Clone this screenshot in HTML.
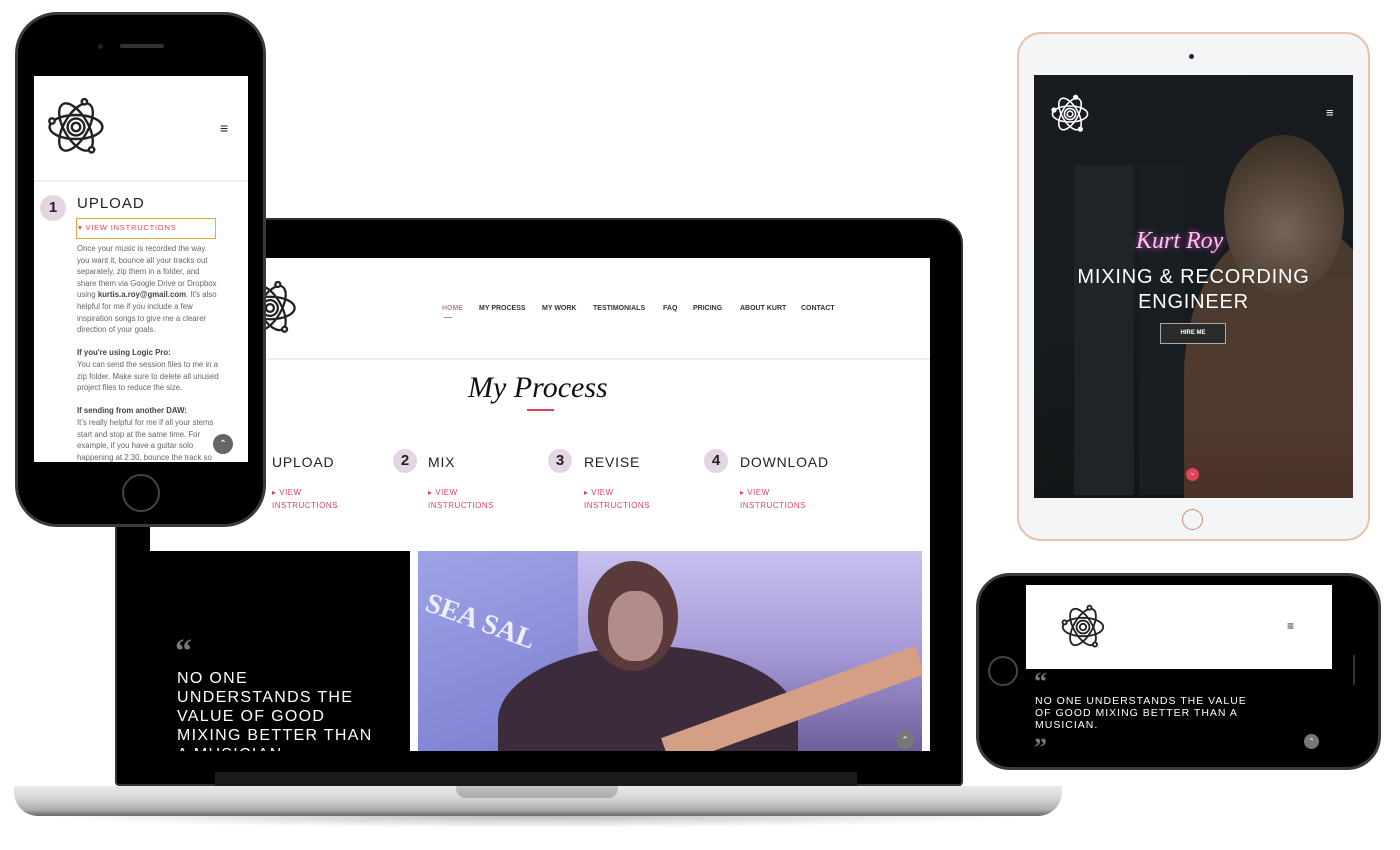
<!DOCTYPE html>
<html><head><meta charset="utf-8"><style>
*{margin:0;padding:0;box-sizing:border-box}
body{width:1400px;height:850px;background:#fff;position:relative;overflow:hidden;font-family:"Liberation Sans",sans-serif}
.a{position:absolute}
.t{position:absolute;white-space:nowrap}
.nav{font-size:7px;font-weight:bold;color:#333;top:47px}
.vi{font-size:8px;color:#e0435b;letter-spacing:.5px;line-height:13px}
.num{position:absolute;width:24px;height:24px;border-radius:50%;background:#e3d5e3;font-size:15px;font-weight:bold;color:#222;text-align:center;line-height:24px}
.st{font-size:14px;color:#222;letter-spacing:.8px}
.ph{font-size:7.8px;color:#666;line-height:11.6px;width:142px;white-space:normal}
.q{font-family:"Liberation Serif",serif;font-weight:bold;color:#777}
</style></head><body>
<svg width="0" height="0" style="position:absolute"><defs>
<symbol id="atom" viewBox="-50 -50 100 100"><g fill="none" stroke="currentColor" stroke-width="4">
<ellipse rx="44" ry="20"/><ellipse rx="44" ry="20" transform="rotate(60)"/><ellipse rx="44" ry="20" transform="rotate(120)"/>
<circle r="14"/><circle r="7"/><circle cx="-40" cy="-10" r="4.5" fill="#fff"/><circle cx="26" cy="38" r="4.5" fill="#fff"/><circle cx="14" cy="-42" r="4.5" fill="#fff"/></g></symbol>
</defs></svg>

<!-- LAPTOP -->
<div class="a" style="left:115px;top:218px;width:848px;height:568px;background:#000;border-radius:26px 26px 4px 4px;border:2px solid #333"></div>
<div class="a" style="left:150px;top:258px;width:780px;height:493px;background:#fff;overflow:hidden">
  <div class="a" style="left:0;top:0;width:780px;height:102px;border-bottom:2px solid #eee"></div>
  <svg class="a" style="left:92px;top:22px;color:#222" width="56" height="56"><use href="#atom"/></svg>
  <div class="t nav" style="left:292px;color:#b48aa6">HOME</div>
  <div class="a" style="left:294px;top:59px;width:8px;height:1px;background:#b48aa6"></div>
  <div class="t nav" style="left:329px">MY PROCESS</div>
  <div class="t nav" style="left:392px">MY WORK</div>
  <div class="t nav" style="left:443px">TESTIMONIALS</div>
  <div class="t nav" style="left:513px">FAQ</div>
  <div class="t nav" style="left:543px">PRICING</div>
  <div class="t nav" style="left:590px">ABOUT KURT</div>
  <div class="t nav" style="left:651px">CONTACT</div>
  <div class="t" style="left:318px;top:113px;font-family:'Liberation Serif',serif;font-style:italic;font-size:30px;color:#111">My Process</div>
  <div class="a" style="left:377px;top:151px;width:27px;height:1.5px;background:#e0435b"></div>
  <div class="num" style="left:243px;top:191px">2</div>
  <div class="num" style="left:398px;top:191px">3</div>
  <div class="num" style="left:554px;top:191px">4</div>
  <div class="t st" style="left:122px;top:196px">UPLOAD</div>
  <div class="t st" style="left:278px;top:196px">MIX</div>
  <div class="t st" style="left:434px;top:196px">REVISE</div>
  <div class="t st" style="left:590px;top:196px">DOWNLOAD</div>
  <div class="t vi" style="left:122px;top:228px">▸ VIEW<br>INSTRUCTIONS</div>
  <div class="t vi" style="left:278px;top:228px">▸ VIEW<br>INSTRUCTIONS</div>
  <div class="t vi" style="left:434px;top:228px">▸ VIEW<br>INSTRUCTIONS</div>
  <div class="t vi" style="left:590px;top:228px">▸ VIEW<br>INSTRUCTIONS</div>
  <div class="a" style="left:0;top:293px;width:260px;height:200px;background:#000"></div>
  <div class="t q" style="left:25px;top:375px;font-size:34px">“</div>
  <div class="a" style="left:27px;top:411px;width:205px;font-size:16px;color:#fff;letter-spacing:1.3px;line-height:19px">NO ONE UNDERSTANDS THE VALUE OF GOOD MIXING BETTER THAN A MUSICIAN.</div>
  <div class="a" style="left:268px;top:293px;width:504px;height:200px;overflow:hidden;background:linear-gradient(180deg,#c7c0ee 0%,#a59ad8 50%,#6e5f9a 100%)">
    <div class="a" style="left:0;top:0;width:160px;height:200px;background:linear-gradient(160deg,#9fa3e6,#7b7fd0)"></div>
    <div class="t" style="left:5px;top:55px;font-family:'Liberation Serif',serif;font-size:28px;color:#eef;transform:rotate(20deg);font-weight:bold">SEA SAL</div>
    <div class="a" style="left:80px;top:95px;width:300px;height:150px;border-radius:50% 50% 0 0;background:#3c2b3a"></div>
    <div class="a" style="left:170px;top:10px;width:90px;height:110px;border-radius:50%;background:#5a3a3a"></div>
    <div class="a" style="left:190px;top:40px;width:55px;height:70px;border-radius:45%;background:#b18c8a"></div>
    <div class="a" style="left:240px;top:140px;width:270px;height:30px;background:#d49f84;transform:rotate(-20deg)"></div>
    <div class="a" style="left:478px;top:180px;width:18px;height:18px;border-radius:50%;background:#777;color:#fff;font-size:9px;text-align:center;line-height:18px">⌃</div>
  </div>
</div>
<div class="a" style="left:215px;top:772px;width:642px;height:14px;background:#1a1a1a"></div>
<div class="a" style="left:14px;top:786px;width:1048px;height:30px;border-radius:2px 2px 24px 24px;background:linear-gradient(#eaeaea,#d6d6d6 40%,#aaa 80%,#666)"></div>
<div class="a" style="left:456px;top:786px;width:162px;height:12px;border-radius:0 0 10px 10px;background:linear-gradient(#c4c4c4,#a9a9a9)"></div>
<div class="a" style="left:40px;top:816px;width:990px;height:12px;background:radial-gradient(ellipse at top,#bbb,#fff 70%)"></div>

<!-- LEFT PHONE -->
<div class="a" style="left:15px;top:12px;width:251px;height:515px;background:#000;border-radius:42px;border:3px solid #3a3a3a"></div>
<div class="a" style="left:98px;top:44px;width:5px;height:5px;border-radius:50%;background:#223"></div>
<div class="a" style="left:120px;top:44px;width:44px;height:4px;border-radius:2px;background:#333"></div>
<div class="a" style="left:122px;top:474px;width:38px;height:38px;border-radius:50%;border:2px solid #444"></div>
<div class="a" style="left:34px;top:76px;width:214px;height:386px;background:#fff;overflow:hidden">
  <div class="a" style="left:0;top:104px;width:214px;height:2px;background:#eee"></div>
  <svg class="a" style="left:12px;top:20px;color:#222" width="60" height="62"><use href="#atom"/></svg>
  <div class="t" style="left:186px;top:44px;font-size:14px;color:#222">≡</div>
  <div class="num" style="left:6px;top:119px;width:26px;height:26px;line-height:26px">1</div>
  <div class="t" style="left:43px;top:119px;font-size:15px;color:#222;letter-spacing:1px">UPLOAD</div>
  <div class="a" style="left:42px;top:142px;width:140px;height:21px;border:1.5px solid #e6a640;font-size:7.5px;color:#e0435b;letter-spacing:.8px;line-height:18px;padding-left:1px">▾ VIEW INSTRUCTIONS</div>
  <div class="a ph" style="left:43px;top:167px">Once your music is recorded the way you want it, bounce all your tracks out separately, zip them in a folder, and share them via Google Drive or Dropbox using <b style="color:#444">kurtis.a.roy@gmail.com</b>. It's also helpful for me if you include a few inspiration songs to give me a clearer direction of your goals.<br><br><b style="color:#444">If you're using Logic Pro:</b><br>You can send the session files to me in a zip folder. Make sure to delete all unused project files to reduce the size.<br><br><b style="color:#444">If sending from another DAW:</b><br>It's really helpful for me if all your stems start and stop at the same time. For example, if you have a guitar solo happening at 2:30, bounce the track so</div>
  <div class="a" style="left:179px;top:358px;width:20px;height:20px;border-radius:50%;background:#666;color:#fff;font-size:10px;text-align:center;line-height:22px">⌃</div>
</div>

<!-- TABLET -->
<div class="a" style="left:1017px;top:32px;width:353px;height:509px;background:#f4f5f7;border-radius:24px;border:2px solid #e8c2aa"></div>
<div class="a" style="left:1189px;top:54px;width:5px;height:5px;border-radius:50%;background:#223"></div>
<div class="a" style="left:1182px;top:509px;width:21px;height:21px;border-radius:50%;border:1.5px solid #c98c74"></div>
<div class="a" style="left:1034px;top:75px;width:319px;height:423px;overflow:hidden;background:linear-gradient(160deg,#1c2226 0%,#1a2024 50%,#121613 100%)">
  <div class="a" style="left:40px;top:90px;width:60px;height:330px;background:#242c30"></div>
  <div class="a" style="left:105px;top:90px;width:45px;height:330px;background:#1e2528"></div>
  <div class="a" style="left:150px;top:150px;width:200px;height:300px;border-radius:50% 40% 0 0;background:linear-gradient(#5b4a37,#6b4a3a 60%,#5c3a2f)"></div>
  <div class="a" style="left:190px;top:60px;width:120px;height:160px;border-radius:50%;background:radial-gradient(circle at 50% 60%,#9a8270,#5d4a38 65%,#3b3226)"></div>
  <div class="a" style="left:0;top:0;width:319px;height:423px;background:rgba(10,12,14,.25)"></div>
  <svg class="a" style="left:16px;top:18px;color:#fff" width="40" height="42"><use href="#atom"/></svg>
  <div class="t" style="left:292px;top:30px;font-size:13px;color:#fff">≡</div>
  <div class="t" style="left:102px;top:153px;font-family:'Liberation Serif',serif;font-style:italic;font-size:24px;color:#f5c8f0;text-shadow:0 0 6px #e040c0">Kurt Roy</div>
  <div class="a" style="left:0;top:190px;width:319px;text-align:center;font-size:20px;color:#fff;letter-spacing:.8px;line-height:25px">MIXING &amp; RECORDING<br>ENGINEER</div>
  <div class="a" style="left:126px;top:248px;width:66px;height:21px;border:1.5px solid #aaa;background:#2a2a2a;color:#fff;font-size:6px;font-weight:bold;text-align:center;line-height:18px">HIRE ME</div>
  <div class="a" style="left:152px;top:393px;width:13px;height:13px;border-radius:50%;background:#e0435b;color:#fff;font-size:7px;text-align:center;line-height:12px">⌄</div>
</div>

<!-- RIGHT PHONE -->
<div class="a" style="left:976px;top:573px;width:405px;height:197px;background:#000;border-radius:34px;border:3px solid #3a3a3a"></div>
<div class="a" style="left:988px;top:656px;width:30px;height:30px;border-radius:50%;border:2px solid #444"></div>
<div class="a" style="left:1353px;top:655px;width:2px;height:30px;background:#333"></div>
<div class="a" style="left:1026px;top:585px;width:306px;height:172px;background:#000;overflow:hidden">
  <div class="a" style="left:0;top:0;width:306px;height:84px;background:#fff"></div>
  <svg class="a" style="left:34px;top:18px;color:#222" width="46" height="48"><use href="#atom"/></svg>
  <div class="t" style="left:261px;top:34px;font-size:12px;color:#222">≡</div>
  <div class="t q" style="left:8px;top:82px;font-size:26px;line-height:30px">“</div>
  <div class="a" style="left:9px;top:110px;width:230px;font-size:10.5px;color:#fff;letter-spacing:1px;line-height:12px">NO ONE UNDERSTANDS THE VALUE OF GOOD MIXING BETTER THAN A MUSICIAN.</div>
  <div class="t q" style="left:8px;top:148px;font-size:26px;line-height:30px">”</div>
  <div class="a" style="left:278px;top:149px;width:15px;height:15px;border-radius:50%;background:#777;color:#fff;font-size:8px;text-align:center;line-height:16px">⌃</div>
</div>
</body></html>
